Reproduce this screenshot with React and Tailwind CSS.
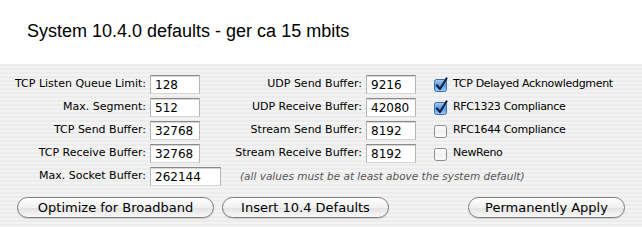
import React from 'react';

const font = "font-['Lucida_Grande','DejaVu_Sans',sans-serif]";

const Field = ({ value, wide }) => (
    <div
        className={`h-[19px] ${wide ? 'w-[71px]' : 'w-[50px]'} bg-white border border-t-[#8a8a8a] border-x-[#b5b5b5] border-b-[#d5d5d5] shadow-[inset_0_1px_0_#d8d8d8] flex items-center pl-[4px] text-[12px] text-black`}
    >
        {value}
    </div>
);

const Check = ({ checked, label }) => (
    <div className="flex items-center gap-[5px] h-[19px] pl-[20px]">
        {checked ? (
            <svg width="14" height="15" viewBox="0 0 14 15">
                <defs>
                    <linearGradient id="cb" x1="0" y1="0" x2="0" y2="1">
                        <stop offset="0" stopColor="#a9cdf3" />
                        <stop offset="0.5" stopColor="#5a9be3" />
                        <stop offset="1" stopColor="#9fd0fb" />
                    </linearGradient>
                </defs>
                <rect x="0.5" y="2.5" width="12" height="12" rx="2" fill="url(#cb)" stroke="#3c6fa8" />
                <path d="M3 8.5 L6 12 L12.5 1.5" fill="none" stroke="#10233f" strokeWidth="2.2" strokeLinecap="round" strokeLinejoin="round" />
            </svg>
        ) : (
            <svg width="14" height="15" viewBox="0 0 14 15">
                <defs>
                    <linearGradient id="cw" x1="0" y1="0" x2="0" y2="1">
                        <stop offset="0" stopColor="#ffffff" />
                        <stop offset="0.5" stopColor="#f1f1f1" />
                        <stop offset="1" stopColor="#ffffff" />
                    </linearGradient>
                </defs>
                <rect x="0.5" y="2.5" width="12" height="12" rx="2" fill="url(#cw)" stroke="#8c8c8c" />
            </svg>
        )}
        <span className="text-[11px] tracking-[-0.3px] text-black whitespace-nowrap">{label}</span>
    </div>
);

const Label = ({ children }) => (
    <div className="h-[19px] flex items-center justify-end pr-[4px] text-[11px] text-black whitespace-nowrap">
        {children}
    </div>
);

const PillButton = ({ children, width }) => (
    <button
        className={`${width} h-[21px] rounded-full border border-[#7d7d7d] bg-[linear-gradient(#ffffff,#f0f0f0_50%,#e2e2e2_51%,#f8f8f8)] shadow-[0_1px_1px_rgba(0,0,0,0.15)] text-[13px] text-black flex items-center justify-center`}
    >
        {children}
    </button>
);

const App = () => {
    return (
        <div className={`w-[642px] h-[227px] flex flex-col ${font}`}>
            <div className="h-[64px] bg-white flex items-center pl-[27px] pb-[2px]">
                <h1 className="text-[18px] text-black font-['Liberation_Sans',Arial,sans-serif]">
                    System 10.4.0 defaults - ger ca 15 mbits
                </h1>
            </div>

            <div className="flex-1 flex flex-col bg-[repeating-linear-gradient(#ececec_0px,#ececec_2px,#f3f3f3_2px,#f3f3f3_4px)]">
                <div className="grid grid-cols-[150px_71px_145px_48px_1fr] gap-y-[4px] pt-[11px]">
                    <Label>TCP Listen Queue Limit:</Label>
                    <Field value="128" />
                    <Label>UDP Send Buffer:</Label>
                    <Field value="9216" />
                    <Check checked label="TCP Delayed Acknowledgment" />

                    <Label>Max. Segment:</Label>
                    <Field value="512" />
                    <Label>UDP Receive Buffer:</Label>
                    <Field value="42080" />
                    <Check checked label="RFC1323 Compliance" />

                    <Label>TCP Send Buffer:</Label>
                    <Field value="32768" />
                    <Label>Stream Send Buffer:</Label>
                    <Field value="8192" />
                    <Check label="RFC1644 Compliance" />

                    <Label>TCP Receive Buffer:</Label>
                    <Field value="32768" />
                    <Label>Stream Receive Buffer:</Label>
                    <Field value="8192" />
                    <Check label="NewReno" />

                    <Label>Max. Socket Buffer:</Label>
                    <Field value="262144" wide />
                    <div className="col-span-3 h-[19px] flex items-center pl-[19px] text-[10.5px] italic text-[#555] whitespace-nowrap">
                        (all values must be at least above the system default)
                    </div>
                </div>

                <div className="flex items-center mt-[11px] pl-[17px]">
                    <PillButton width="w-[197px]">Optimize for Broadband</PillButton>
                    <div className="ml-[8px]">
                        <PillButton width="w-[167px]">Insert 10.4 Defaults</PillButton>
                    </div>
                    <div className="ml-[79px]">
                        <PillButton width="w-[157px]">Permanently Apply</PillButton>
                    </div>
                </div>
            </div>
        </div>
    );
};

export default App;
